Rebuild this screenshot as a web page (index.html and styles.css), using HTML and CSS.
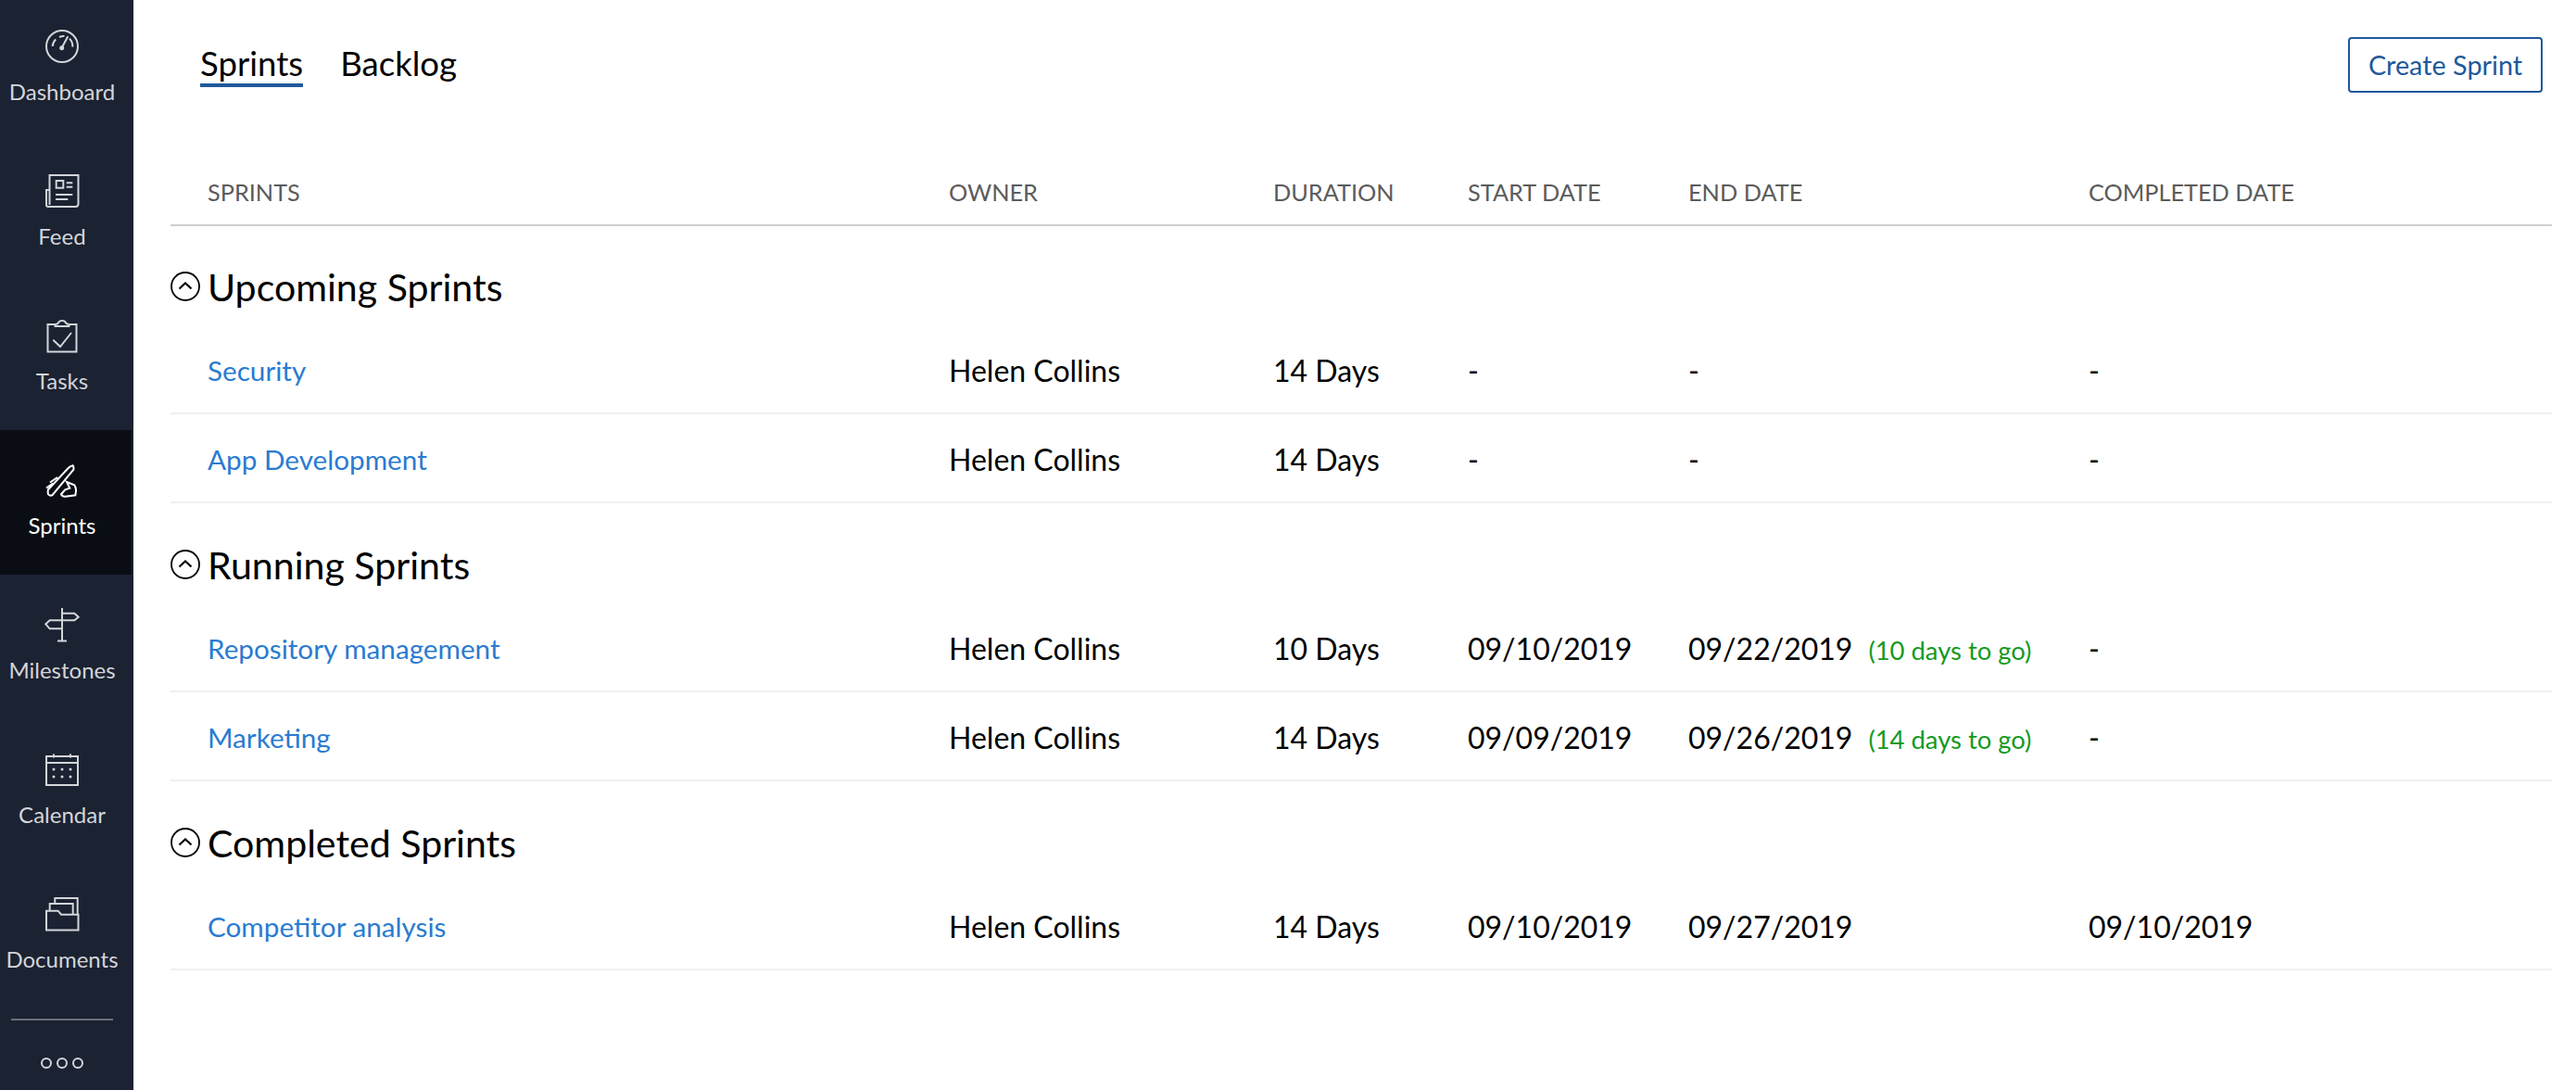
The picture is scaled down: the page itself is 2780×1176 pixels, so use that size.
FILE: index.html
```html
<!DOCTYPE html>
<html lang="en">
<head>
<meta charset="utf-8">
<title>Sprints</title>
<link rel="stylesheet" href="styles.css">
</head>
<body>
<div class="app">
  <nav class="sidebar">
    <a class="nav-item first"><svg class="ic" viewBox="0 0 36 36"><circle cx="18" cy="18" r="17"/><path d="M7.700 18a11 11 0 0 1 3.500-7.500M15 8a11 11 0 0 1 5.500-1M26 9.700a11 11 0 0 1 3.300 9M18 19l6.300-11.700"/><circle class="fill" cx="17.700" cy="19.700" r="2.500"/></svg><span>Dashboard</span></a>
    <a class="nav-item"><svg class="ic" viewBox="0 0 36 36"><path d="M4.500 33V1h31v31a3 3 0 0 1-3 3H3a2 2 0 0 1-2-2V17h3.500"/><path d="M11.700 7h7.600v7.700h-7.600zM22.700 9.300h6.600M22.700 13.700h6.600M11 22h18.300M11 27h13.300"/></svg><span>Feed</span></a>
    <a class="nav-item"><svg class="ic" viewBox="0 0 36 36"><path d="M10.500 6H2.500v29.500h31V6h-8v2h-15zM10.500 6c1.500 0 3-.5 4-2.500 1-2 6-2 7 0 1 2 2.500 2.500 4 2.500M8.300 22.700l7.700 7.300L28 15"/></svg><span>Tasks</span></a>
    <a class="nav-item active"><svg class="ic" viewBox="0 0 36 36"><path d="M3 28.300L24.700 5c1.500-1.500 3.500-2.500 5-2.700.8 1.500 1 3 .6 4.400L7.300 34.300c-1.500.5-3.500.2-4.300-1-.4-1.700-.6-3.200 0-5zM5 20.500l8-5.500M1 26.500l7-5M23 20l8.300 3.300c1.200 2 1.900 4.700 1.700 6.700l-.7 4.300-11 1.400c-2 .1-3.600-.8-4.300-2.400l4.300-5 5-1.600z"/></svg><span>Sprints</span></a>
    <a class="nav-item"><svg class="ic" viewBox="0 0 36 36"><path d="M18 0v35.500M13 35.500h10M18 5.700h13.300l4.400 4-4.400 3.600H18M18 13.300H4.700l-4.400 4 4.400 5H18"/></svg><span>Milestones</span></a>
    <a class="nav-item"><svg class="ic" viewBox="0 0 36 36"><path d="M1 4h34v31H1zM1 11h34M9 1.500v4M27 1.500v4"/><circle class="fill" cx="9" cy="18" r="1.500"/><circle class="fill" cx="18" cy="18" r="1.500"/><circle class="fill" cx="27" cy="18" r="1.500"/><circle class="fill" cx="9" cy="26" r="1.500"/><circle class="fill" cx="18" cy="26" r="1.500"/><circle class="fill" cx="27" cy="26" r="1.500"/></svg><span>Calendar</span></a>
    <a class="nav-item"><svg class="ic" viewBox="0 0 36 36"><path d="M1 35.500V14.700h12.700l3.300 4h18.500v16.800zM4.700 14.700V7h25v11.700M10.300 7V1h24.400v17.700"/></svg><span>Documents</span></a>
    <div class="nav-rule"></div>
    <div class="nav-more"><i></i><i></i><i></i></div>
  </nav>
  <main class="main">
    <header class="topbar">
      <div class="tabs">
        <a class="tab on">Sprints</a>
        <a class="tab">Backlog</a>
      </div>
      <button class="create">Create Sprint</button>
    </header>
    <div class="row head">
      <div>SPRINTS</div><div>OWNER</div><div>DURATION</div><div>START DATE</div><div>END DATE</div><div>COMPLETED DATE</div>
    </div>

    <h2 class="section"><svg class="toggle" viewBox="0 0 32 32"><circle cx="16" cy="16" r="15"/><path class="chev" d="M9.500 18.500L16 12.500l6.500 6"/></svg>Upcoming Sprints</h2>
    <div class="row item"><a>Security</a><div>Helen Collins</div><div>14 Days</div><div>-</div><div>-</div><div>-</div></div>
    <div class="row item"><a>App Development</a><div>Helen Collins</div><div>14 Days</div><div>-</div><div>-</div><div>-</div></div>

    <h2 class="section"><svg class="toggle" viewBox="0 0 32 32"><circle cx="16" cy="16" r="15"/><path class="chev" d="M9.500 18.500L16 12.500l6.500 6"/></svg>Running Sprints</h2>
    <div class="row item"><a>Repository management</a><div>Helen Collins</div><div>10 Days</div><div>09/10/2019</div><div>09/22/2019<span class="togo">(10 days to go)</span></div><div>-</div></div>
    <div class="row item"><a>Marketing</a><div>Helen Collins</div><div>14 Days</div><div>09/09/2019</div><div>09/26/2019<span class="togo">(14 days to go)</span></div><div>-</div></div>

    <h2 class="section"><svg class="toggle" viewBox="0 0 32 32"><circle cx="16" cy="16" r="15"/><path class="chev" d="M9.500 18.500L16 12.500l6.500 6"/></svg>Completed Sprints</h2>
    <div class="row item"><a>Competitor analysis</a><div>Helen Collins</div><div>14 Days</div><div>09/10/2019</div><div>09/27/2019</div><div>09/10/2019</div></div>
  </main>
</div>
</body>
</html>
```
FILE: styles.css
```css
* { box-sizing: border-box; }
html, body { margin: 0; height: 100%; background: #fff; }
body { font-family: Lato, "Liberation Sans", sans-serif; color: #000; overflow: hidden; }
.app { display: flex; height: 1176px; }

.sidebar { width: 144px; flex: none; background: #1b2232; display: flex; flex-direction: column; padding-right: 2px; }
.nav-item { height: 156px; display: flex; flex-direction: column; align-items: center; padding: 36px 8px 0 0; color: #d3d5d9; font-size: 24px; line-height: 30px; }
.nav-item.first { height: 152px; padding-top: 32px; }
.nav-item span { margin-top: 16px; }
.nav-item.active { background: #0a0e14; color: #fff; }
.ic { width: 36px; height: 36px; fill: none; stroke: currentColor; stroke-width: 2; overflow: visible; }
.ic .fill { fill: currentColor; stroke: none; }
.nav-rule { height: 2px; background: #6a6f79; margin: 11px 20px 0 12px; }
.nav-more { display: flex; justify-content: center; gap: 5px; margin: 40px 8px 0 0; }
.nav-more i { width: 12px; height: 12px; border: 2px solid #d3d5d9; border-radius: 50%; }

.main { flex: 1; min-width: 0; padding: 0 26px 0 40px; }
.topbar { height: 192px; padding: 41px 10px 0 32px; display: flex; justify-content: space-between; align-items: flex-start; }
.tabs { display: flex; gap: 40px; }
.tab { font-size: 36.600px; line-height: 54px; height: 53px; }
.tab.on { border-bottom: 4px solid #20599b; }
.create { width: 210px; height: 60px; margin-top: -1px; border: 2px solid #20599b; border-radius: 4px; background: #fff; color: #20599b; font: 28.800px/1 Lato, sans-serif; padding: 0; }

.row { display: grid; grid-template-columns: 800px 350px 210px 238px 432px 1fr; padding-left: 40px; align-items: center; }
.head { height: 52px; padding-bottom: 22px; border-bottom: 2px solid #cfcfcf; color: #5b5b5b; font-size: 25.300px; }
.item { height: 96px; border-bottom: 2px solid #f0f0f0; font-size: 32px; padding-top: 3px; }
.item a { color: #2a7bd1; font-size: 29.700px; }
.togo { color: #149a1f; font-size: 27.400px; margin-left: 17px; }
.section { height: 107px; margin: 0; display: flex; align-items: center; padding-top: 22px; font-size: 41.100px; font-weight: 400; line-height: 48px; }
.item + .section { height: 108px; padding-top: 24px; }
.toggle { width: 32px; height: 32px; margin-right: 8px; fill: none; stroke: #000; stroke-width: 1.800; }
.chev { stroke-width: 2.200; }
```
